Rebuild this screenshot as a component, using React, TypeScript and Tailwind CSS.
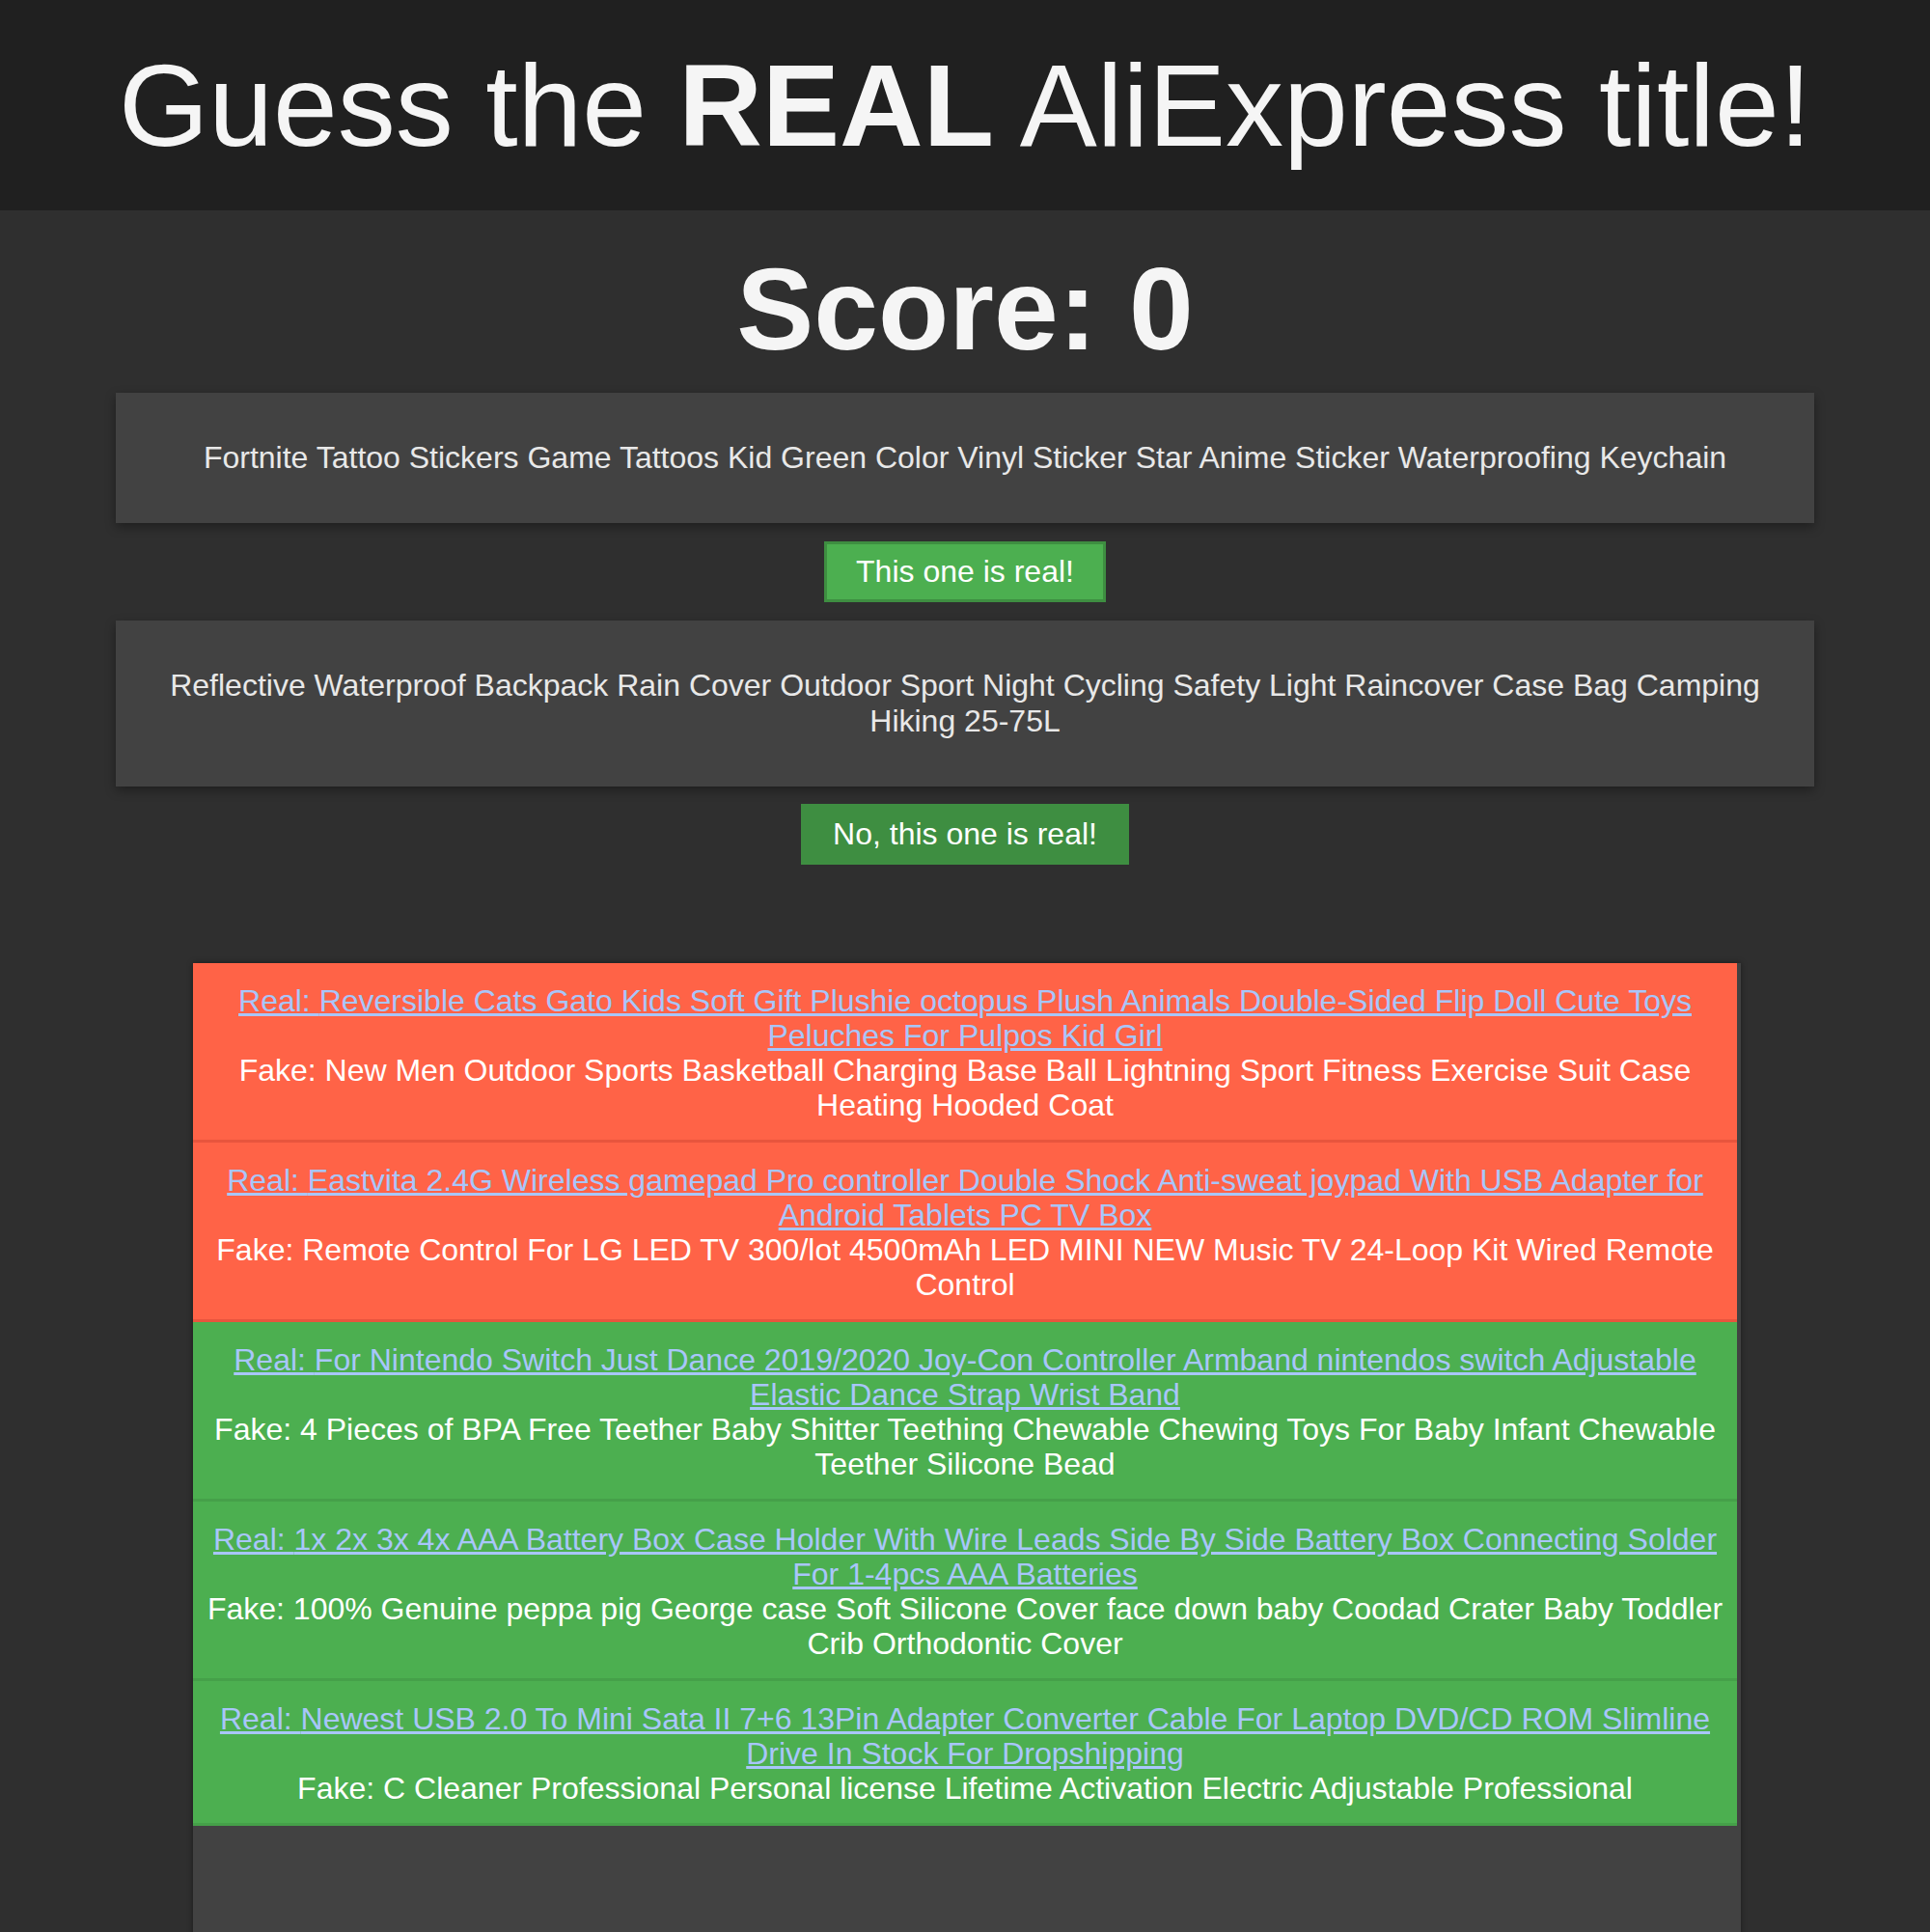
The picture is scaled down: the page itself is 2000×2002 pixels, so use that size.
type Round = {
  real: string;
  fake: string;
  correct: boolean;
};

const history: Round[] = [
  {
    real: "Reversible Cats Gato Kids Soft Gift Plushie octopus Plush Animals Double-Sided Flip Doll Cute Toys Peluches For Pulpos Kid Girl",
    fake: "New Men Outdoor Sports Basketball Charging Base Ball Lightning Sport Fitness Exercise Suit Case Heating Hooded Coat",
    correct: false,
  },
  {
    real: "Eastvita 2.4G Wireless gamepad Pro controller Double Shock Anti-sweat joypad With USB Adapter for Android Tablets PC TV Box",
    fake: "Remote Control For LG LED TV 300/lot 4500mAh LED MINI NEW Music TV 24-Loop Kit Wired Remote Control",
    correct: false,
  },
  {
    real: "For Nintendo Switch Just Dance 2019/2020 Joy-Con Controller Armband nintendos switch Adjustable Elastic Dance Strap Wrist Band",
    fake: "4 Pieces of BPA Free Teether Baby Shitter Teething Chewable Chewing Toys For Baby Infant Chewable Teether Silicone Bead",
    correct: true,
  },
  {
    real: "1x 2x 3x 4x AAA Battery Box Case Holder With Wire Leads Side By Side Battery Box Connecting Solder For 1-4pcs AAA Batteries",
    fake: "100% Genuine peppa pig George case Soft Silicone Cover face down baby Coodad Crater Baby Toddler Crib Orthodontic Cover",
    correct: true,
  },
  {
    real: "Newest USB 2.0 To Mini Sata II 7+6 13Pin Adapter Converter Cable For Laptop DVD/CD ROM Slimline Drive In Stock For Dropshipping",
    fake: "C Cleaner Professional Personal license Lifetime Activation Electric Adjustable Professional",
    correct: true,
  },
];

function TitleCard({ children }: { children: React.ReactNode }) {
  return (
    <div className="mx-auto w-[1760px] bg-[#424242] px-[48px] py-[49px] text-center text-[32px] leading-[37px] text-[#e8e8e8] shadow-[0_4px_10px_rgba(0,0,0,0.35)]">
      {children}
    </div>
  );
}

function HistoryItem({ round }: { round: Round }) {
  return (
    <div
      className={
        round.correct
          ? "border-b-[3px] border-[#45a049] bg-[#4caf50] px-[12px] pt-[21px] pb-[18px] text-center text-[32px] leading-[36px]"
          : "border-b-[3px] border-[#e8553d] bg-[#ff6347] px-[12px] pt-[21px] pb-[18px] text-center text-[32px] leading-[36px]"
      }
    >
      <a className="text-[#a8c6fa] underline" href="#">
        Real: {round.real}
      </a>
      <div className="text-white">Fake: {round.fake}</div>
    </div>
  );
}

export default function App() {
  return (
    <div className="min-h-[2002px] bg-[#2f2f2f] font-['Liberation_Sans',Arial,sans-serif] text-[#f5f5f5]">
      <header className="bg-[#202020] py-[40px] text-center">
        <h1 className="text-[120px] leading-[138px]">
          Guess the <b>REAL</b> AliExpress title!
        </h1>
      </header>

      <h2 className="mt-[33px] mb-[18px] text-center text-[120px] leading-[138px] font-bold">
        Score: 0
      </h2>

      <TitleCard>
        Fortnite Tattoo Stickers Game Tattoos Kid Green Color Vinyl Sticker Star Anime Sticker Waterproofing Keychain
      </TitleCard>
      <div className="flex justify-center py-[19px]">
        <button className="border-[3px] border-[#3e8e41] bg-[#4caf50] px-[30px] py-[10px] text-[32px] leading-[37px] text-white">
          This one is real!
        </button>
      </div>

      <TitleCard>
        Reflective Waterproof Backpack Rain Cover Outdoor Sport Night Cycling Safety Light Raincover Case Bag Camping Hiking 25-75L
      </TitleCard>
      <div className="flex justify-center pt-[18px]">
        <button className="bg-[#3e8e41] px-[33px] py-[13px] text-[32px] leading-[37px] text-white">
          No, this one is real!
        </button>
      </div>

      <div className="mt-[102px] ml-[200px] w-[1604px] bg-[#424242] pr-[4px] pb-[120px] shadow-[0_0_6px_rgba(0,0,0,0.4)]">
        {history.map((round) => (
          <HistoryItem key={round.real} round={round} />
        ))}
      </div>
    </div>
  );
}
